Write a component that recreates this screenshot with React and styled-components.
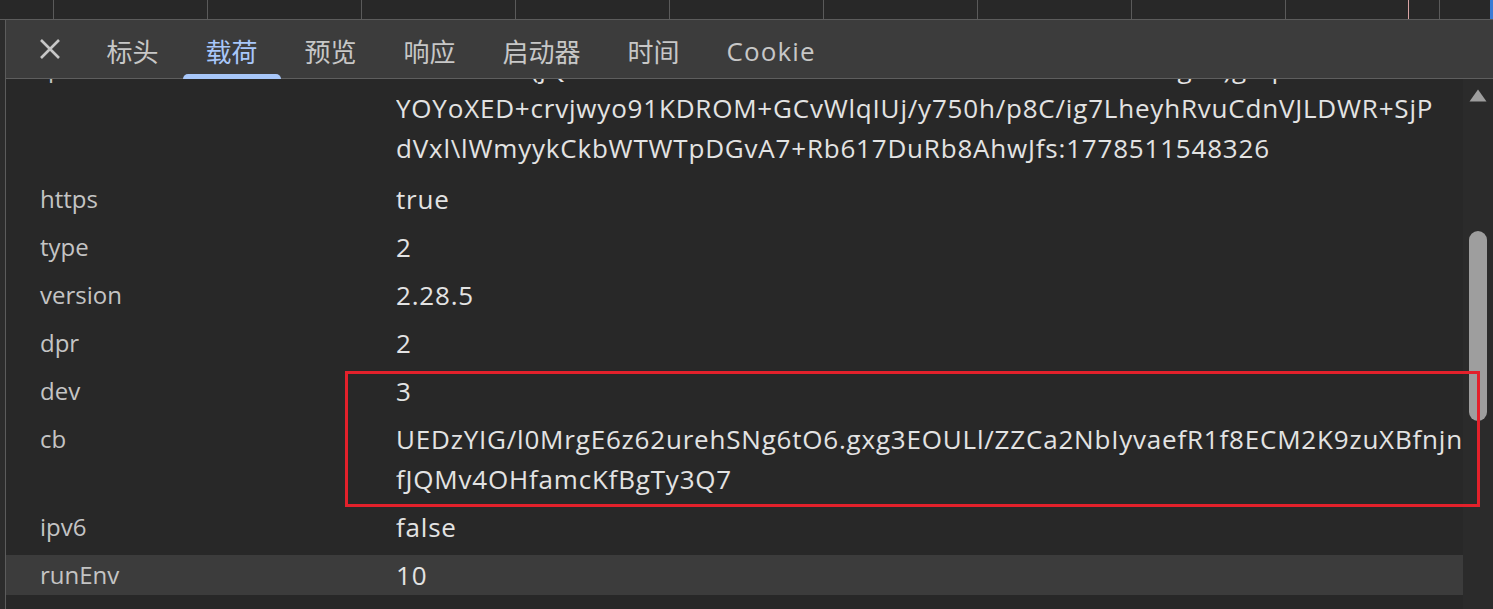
import React from "react";
import styled, { createGlobalStyle } from "styled-components";

const GlobalStyle = createGlobalStyle`
  html, body {
    margin: 0;
    padding: 0;
    background: #282828;
    overflow: hidden;
  }
  * {
    box-sizing: border-box;
  }
`;

const Page = styled.div`
  position: relative;
  width: 1493px;
  height: 609px;
  display: flex;
  flex-direction: column;
  background: #282828;
  font-family: "Open Sans", "Noto Sans CJK SC", sans-serif;
  overflow: hidden;
`;

const Timeline = styled.div`
  position: relative;
  display: flex;
  height: 20px;
  flex-shrink: 0;
  background: #282828;
  border-bottom: 1px solid #5c5c5c;
`;

const TimeCell = styled.div`
  flex-shrink: 0;
  width: ${(p) => p.$w}px;
  height: 100%;
  border-right: 1px solid #5a5a5a;
`;

const Marker = styled.div`
  position: absolute;
  top: 0;
  bottom: 0;
  left: ${(p) => p.$x}px;
  width: ${(p) => p.$w || 1}px;
  background: ${(p) => p.$color};
`;

const Main = styled.div`
  flex: 1;
  display: flex;
  min-height: 0;
`;

const LeftEdge = styled.div`
  width: 6px;
  flex-shrink: 0;
  background: #2c2c2c;
  border-right: 1px solid #5c5c5c;
`;

const Panel = styled.div`
  flex: 1;
  display: flex;
  flex-direction: column;
  min-width: 0;
`;

const TabBar = styled.div`
  position: relative;
  z-index: 1;
  display: flex;
  align-items: stretch;
  height: 59px;
  flex-shrink: 0;
  background: #3c3c3c;
  border-bottom: 1px solid #5e5e5e;
`;

const CloseButton = styled.button`
  width: 44px;
  margin: 0 11px 0 22px;
  padding: 0;
  border: 0;
  background: transparent;
  display: flex;
  align-items: center;
  justify-content: center;
  color: #c7c7c7;
`;

const Tab = styled.div`
  position: relative;
  display: flex;
  align-items: center;
  padding: 4px 23.5px 0;
  font-size: 26px;
  letter-spacing: ${(p) => (p.$latin ? "1.1px" : "0")};
  color: ${(p) => (p.$active ? "#a8c7fa" : "#c7c7c7")};
  white-space: nowrap;

  &::after {
    content: "";
    display: ${(p) => (p.$active ? "block" : "none")};
    position: absolute;
    left: 1px;
    right: 0;
    bottom: -1px;
    height: 5px;
    background: #a8c7fa;
    border-radius: 5px 5px 0 0;
  }
`;

const Body = styled.div`
  flex: 1;
  display: flex;
  min-height: 0;
  overflow: hidden;
`;

const List = styled.div`
  flex: 1;
  display: flex;
  flex-direction: column;
  gap: 8px;
  margin-top: -31px;
  min-width: 0;
`;

const Row = styled.div`
  display: grid;
  grid-template-columns: 356px 1fr;
  padding-left: 34px;
  margin-bottom: ${(p) => (p.$first ? "3px" : "0")};
  line-height: 40px;
  background: ${(p) => (p.$hover ? "#3c3c3c" : "transparent")};
`;

const Key = styled.div`
  color: #c4c4c4;
  font-size: 24px;
  white-space: nowrap;
`;

const Value = styled.div`
  color: #e3e3e3;
  font-size: 26px;
  letter-spacing: 0.8px;
  overflow: hidden;
`;

const Line = styled.div`
  white-space: nowrap;
`;

const Scrollbar = styled.div`
  width: 30px;
  flex-shrink: 0;
  display: flex;
  flex-direction: column;
  align-items: center;
  padding-top: 10px;
  background: #2b2b2b;
`;

const Thumb = styled.div`
  width: 18px;
  height: 190px;
  margin-top: 129px;
  border-radius: 9px;
  background: #9e9e9e;
`;

const Highlight = styled.div`
  position: absolute;
  left: 345px;
  top: 371px;
  width: 1135px;
  height: 136px;
  border: 3px solid #e3212b;
  pointer-events: none;
`;

const tabs = ["标头", "载荷", "预览", "响应", "启动器", "时间", "Cookie"];

const rows = [
  {
    key: "fp",
    lines: [
      "a3VtL2eBk(jQ8nZcW1sRkT4xHu5NbMdE0oFAv7CLxA5iK9rC6hgXe)geqUtDb2sHwRmK",
      "YOYoXED+crvjwyo91KDROM+GCvWlqIUj/y750h/p8C/ig7LheyhRvuCdnVJLDWR+SjP",
      "dVxl\\lWmyykCkbWTWTpDGvA7+Rb617DuRb8AhwJfs:1778511548326",
    ],
  },
  { key: "https", lines: ["true"] },
  { key: "type", lines: ["2"] },
  { key: "version", lines: ["2.28.5"] },
  { key: "dpr", lines: ["2"] },
  { key: "dev", lines: ["3"] },
  {
    key: "cb",
    lines: [
      "UEDzYIG/l0MrgE6z62urehSNg6tO6.gxg3EOULl/ZZCa2NbIyvaefR1f8ECM2K9zuXBfnjn",
      "fJQMv4OHfamcKfBgTy3Q7",
    ],
  },
  { key: "ipv6", lines: ["false"] },
  { key: "runEnv", lines: ["10"], hover: true },
];

const timeCells = [54, 154, 154, 154, 154, 154, 154, 154, 154, 154, 60];

const CloseIcon = () => (
  <svg width="22" height="22" viewBox="0 0 22 22">
    <path
      d="M2 2 L20 20 M20 2 L2 20"
      stroke="currentColor"
      strokeWidth="2.6"
      fill="none"
    />
  </svg>
);

const UpArrow = () => (
  <svg width="18" height="13" viewBox="0 0 18 13">
    <path d="M9 0.5 L17.5 12.5 L0.5 12.5 Z" fill="#9e9e9e" />
  </svg>
);

export default function App() {
  return (
    <>
      <GlobalStyle />
      <Page>
        <Timeline>
          {timeCells.map((w, i) => (
            <TimeCell key={i} $w={w} />
          ))}
          <Marker $x={1408} $color="#d9a4a4" />
          <Marker $x={1490} $w={3} $color="#3a7bd5" />
        </Timeline>
        <Main>
          <LeftEdge />
          <Panel>
            <TabBar>
              <CloseButton aria-label="关闭">
                <CloseIcon />
              </CloseButton>
              {tabs.map((t) => (
                <Tab
                  key={t}
                  $active={t === "载荷"}
                  $latin={/^[A-Za-z]+$/.test(t)}
                >
                  {t}
                </Tab>
              ))}
            </TabBar>
            <Body>
              <List>
                {rows.map((r, i) => (
                  <Row key={r.key} $hover={r.hover} $first={i === 0}>
                    <Key>{r.key}</Key>
                    <Value>
                      {r.lines.map((l, j) => (
                        <Line key={j}>{l}</Line>
                      ))}
                    </Value>
                  </Row>
                ))}
              </List>
              <Scrollbar>
                <UpArrow />
                <Thumb />
              </Scrollbar>
            </Body>
          </Panel>
        </Main>
        <Highlight />
      </Page>
    </>
  );
}
